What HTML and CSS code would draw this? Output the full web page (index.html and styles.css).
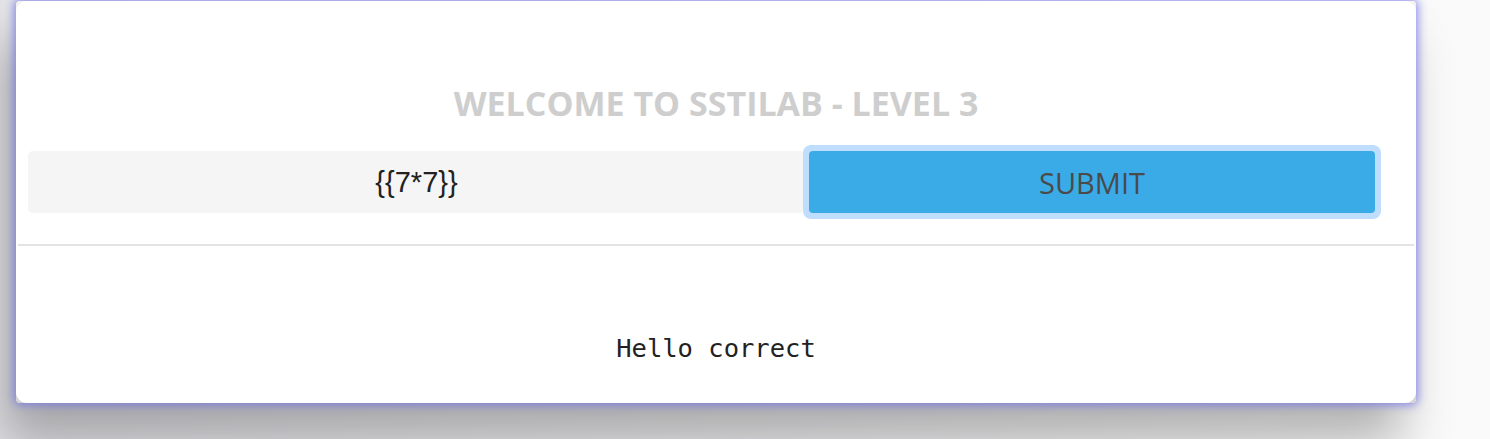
FILE: index.html
```html
<!DOCTYPE html>
<html>
<head>
<meta charset="utf-8">
<link rel="stylesheet" href="styles.css">
</head>
<body>
<div class="frame">
  <div class="card">
    <h1 class="title">WELCOME TO SSTILAB - LEVEL 3</h1>
    <form class="form">
      <div class="input">{{7*7}}</div>
      <div class="btn-ring"><button class="btn" type="button">SUBMIT</button></div>
    </form>
    <hr class="divider">
    <div class="output">Hello correct</div>
  </div>
</div>
</body>
</html>
```
FILE: styles.css
```css
html, body {
  margin: 0;
  padding: 0;
  height: 100%;
  overflow: hidden;
}
body {
  background: linear-gradient(90deg, #e4e4e8 0%, #eeeef0 50%, #fafafa 100%);
  font-family: "Open Sans", "Noto Sans", sans-serif;
}
.frame {
  margin: 1px 0 0 16px;
  width: 1400px;
  height: 402px;
  border-radius: 4px;
  background: linear-gradient(180deg, #f2f2f2, #d4d4d4);
  box-shadow: 0 0 10px 2px rgba(115, 115, 230, 0.8), -14px 40px 50px 0 rgba(0, 0, 0, 0.28);
}
.card {
  height: 100%;
  box-sizing: border-box;
  background: #fff;
  border-radius: 11px;
  display: flex;
  flex-direction: column;
  padding-top: 81px;
}
.title {
  margin: 0;
  text-align: center;
  font-size: 34px;
  font-weight: 700;
  color: #cecece;
  line-height: 42px;
  letter-spacing: 0;
}
.form {
  margin: 21px 0 0 12px;
  display: flex;
  align-items: center;
  height: 74px;
}
.input {
  width: 777px;
  height: 62px;
  background: #f5f5f5;
  border-radius: 5px;
  display: flex;
  align-items: center;
  justify-content: center;
  font-family: "Liberation Sans", Arial, sans-serif;
  font-size: 29px;
  color: #222;
}
.btn-ring {
  margin-left: -2px;
  padding: 6px;
  background: #bfdefe;
  border-radius: 8px;
  display: flex;
}
.btn {
  width: 566px;
  height: 62px;
  border: 0;
  border-radius: 4px;
  background: #3aabe7;
  color: #4a4a4a;
  font-family: "Open Sans", sans-serif;
  font-size: 29px;
  padding: 0;
}
.divider {
  margin: 25px 2px 0 2px;
  border: 0;
  height: 2px;
  background: #e3e3e3;
}
.output {
  margin-top: 87px;
  text-align: center;
  font-family: "DejaVu Sans Mono", monospace;
  font-size: 25.5px;
  color: #222;
  line-height: 30px;
}
```
